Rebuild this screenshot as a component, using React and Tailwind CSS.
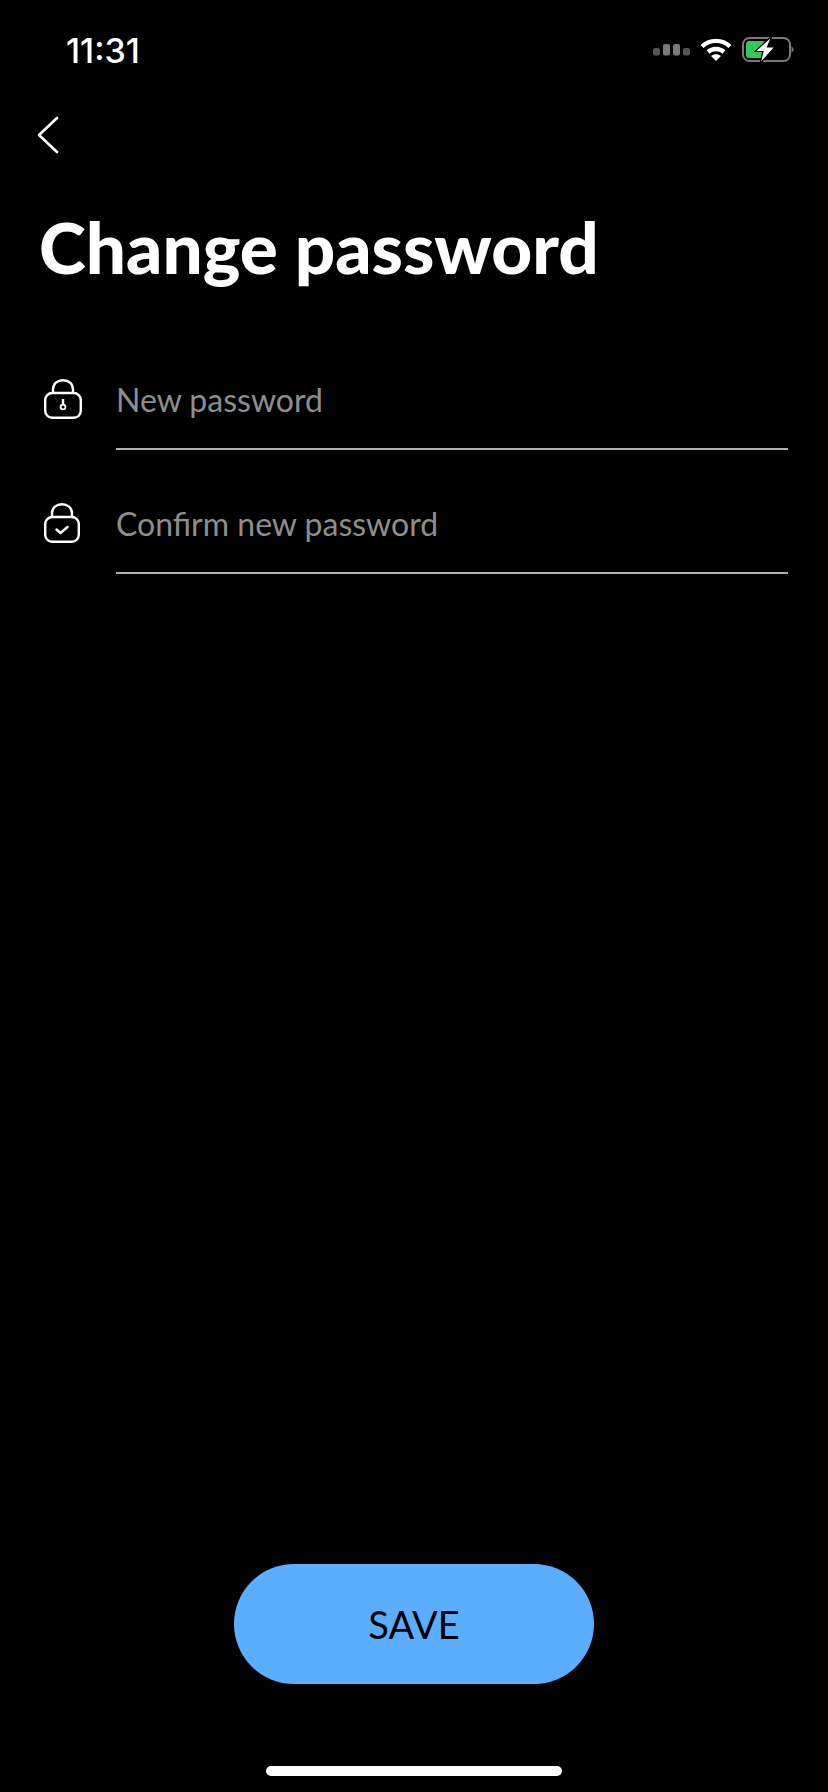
function BackIcon() {
  return (
    <svg width="24" height="38" viewBox="0 0 24 38" fill="none" stroke="white" strokeWidth="2.6" strokeLinecap="round" strokeLinejoin="round">
      <path d="M21 2 L3 19 L21 36" />
    </svg>
  );
}

function SignalIcon() {
  return (
    <svg width="37" height="12" viewBox="0 0 37 12">
      <rect x="0" y="4" width="7" height="7.5" rx="2" fill="#555555" />
      <rect x="10" y="0" width="7" height="11.5" rx="2" fill="#7a7a7a" />
      <rect x="20" y="0" width="7" height="11.5" rx="2" fill="#7a7a7a" />
      <rect x="30" y="4" width="7" height="7.5" rx="2" fill="#555555" />
    </svg>
  );
}

function WifiIcon() {
  return (
    <svg width="32" height="24" viewBox="0 0 32 24" fill="none" stroke="white" strokeWidth="4.4">
      <path d="M2 8.5 C10 1, 22 1, 30 8.5" />
      <path d="M8 14 C12.5 10, 19.5 10, 24 14" />
      <path d="M11 18 L16 23 L21 18 C18 15.5, 14 15.5, 11 18 Z" fill="white" stroke="none" />
    </svg>
  );
}

function BatteryIcon() {
  return (
    <svg width="52" height="28" viewBox="0 0 52 28" fill="none">
      <rect x="1" y="2" width="47" height="23" rx="6.5" stroke="#7a7a7a" strokeWidth="2" />
      <rect x="4" y="5" width="20" height="17" rx="3" fill="#34c759" />
      <path d="M49.5 10 L52 13.5 L49.5 17 Z" fill="#7a7a7a" />
      <path d="M30 0 L13 15.5 H21 L18 27.5 L33 11 H25.5 Z" fill="white" stroke="black" strokeWidth="1.2" />
    </svg>
  );
}

function KeyLock() {
  return (
    <svg width="38" height="40" viewBox="0 0 38 40" fill="none" stroke="white" strokeWidth="2.4">
      <path d="M9 14 V10.5 C9 4.5 13.5 1.2 19 1.2 C24.5 1.2 29 4.5 29 10.5 V14" />
      <rect x="1.2" y="14" width="35.6" height="24.8" rx="7" />
      <path d="M19 20 V25" />
      <circle cx="19" cy="28" r="2.4" fill="black" stroke="white" strokeWidth="1.8" />
    </svg>
  );
}

function CheckLock() {
  return (
    <svg width="36" height="40" viewBox="0 0 36 40" fill="none" stroke="white" strokeWidth="2.4">
      <path d="M8 14 V10.5 C8 4.5 12.5 1.2 18 1.2 C23.5 1.2 28 4.5 28 10.5 V14" />
      <rect x="1.2" y="14" width="33.6" height="24.8" rx="7" />
      <path d="M12.5 26.5 L16.5 30 L23.5 24" strokeLinecap="round" strokeLinejoin="round" />
    </svg>
  );
}

function Field({ icon, label }) {
  return (
    <div className="flex h-[124px] pr-10">
      <div className="w-[116px] pl-[44px] pt-[19px]">{icon}</div>
      <div className="flex-1 border-b-2 border-[#b0b0b0] h-[90px] pt-[12px] text-[32px] leading-[56px] text-[#8e8e8e]">
        {label}
      </div>
    </div>
  );
}

export default function App() {
  return (
    <div className="w-[828px] h-[1792px] bg-black text-white flex flex-col font-['Lato',sans-serif] overflow-hidden">
      <div className="h-[88px] flex items-center justify-between pl-[66px] pr-[34px] pt-[12px]">
        <span className="font-['Inter',sans-serif] font-medium text-[34px] text-white">11:31</span>
        <div className="flex items-center gap-[10px]">
          <SignalIcon />
          <WifiIcon />
          <BatteryIcon />
        </div>
      </div>

      <div className="pl-[36px] pt-[28px] h-[72px]">
        <BackIcon />
      </div>

      <h1 className="pl-[39px] mt-[44px] text-[71px] leading-[86px] font-black text-white">Change password</h1>

      <div className="mt-[70px]">
        <Field icon={<KeyLock />} label="New password" />
        <Field icon={<CheckLock />} label="Confirm new password" />
      </div>

      <div className="mt-auto flex flex-col items-center">
        <button className="w-[360px] h-[120px] rounded-[60px] bg-[#5aadff] text-black text-[38px]">SAVE</button>
        <div className="mt-[82px] mb-[16px] w-[296px] h-[10px] rounded-full bg-white" />
      </div>
    </div>
  );
}
